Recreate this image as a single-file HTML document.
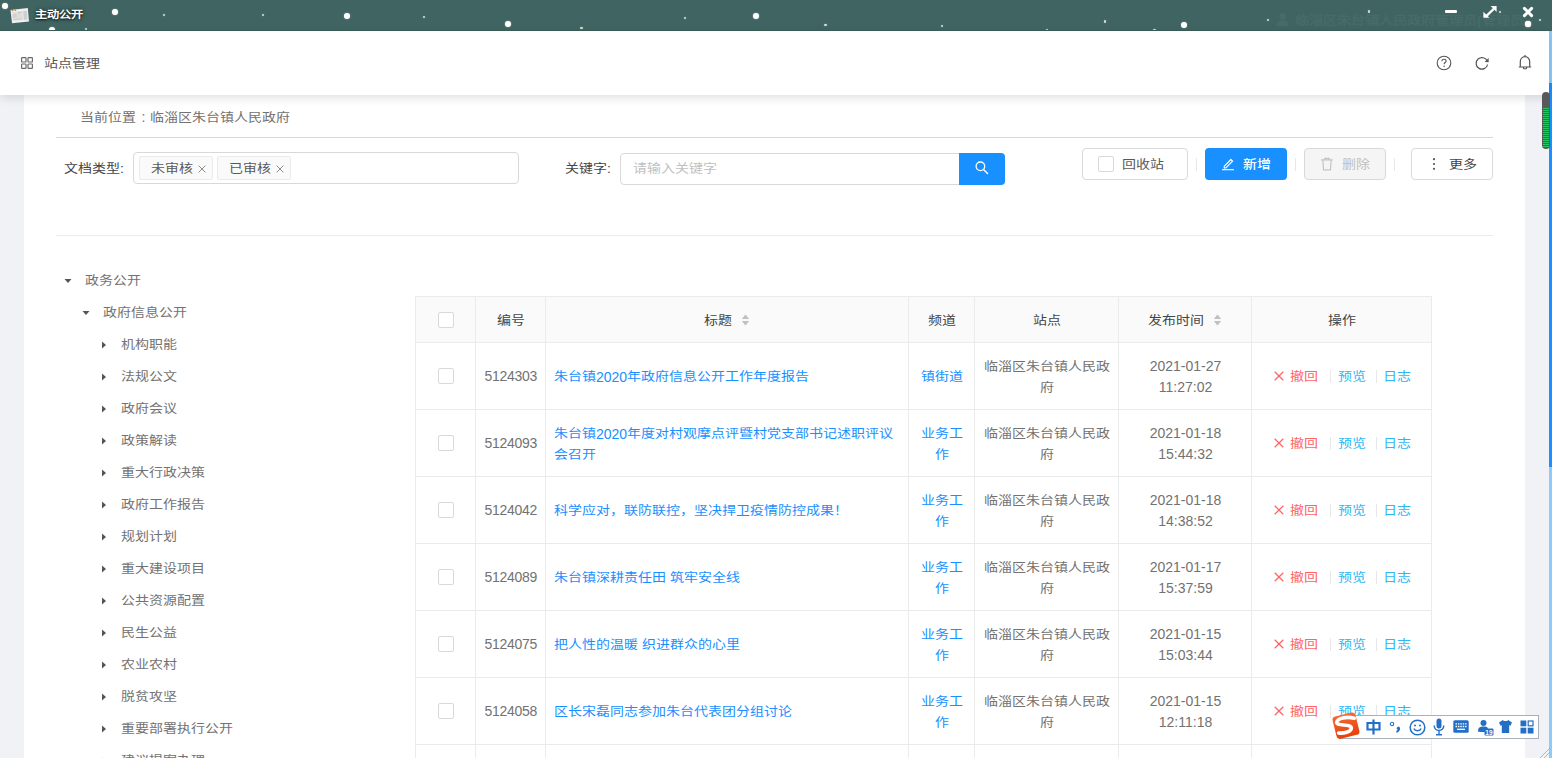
<!DOCTYPE html><html lang="zh-CN"><head><meta charset="utf-8"><title>主动公开</title><style>
*{margin:0;padding:0;box-sizing:border-box;}
html,body{width:1552px;height:758px;overflow:hidden;}
body{font-family:"Liberation Sans",sans-serif;font-size:14px;color:#666;background:#f0f2f5;position:relative;}
div,svg{position:absolute;}
.t{white-space:nowrap;line-height:20px;height:20px;}
.cj{transform-origin:0 10px;transform:scaleY(0.86);}
.cj .d{display:inline-block;transform-origin:0 10px;transform:scaleY(1.1628);}
.c{text-align:center;}
#tb{left:0;top:0;width:1552px;height:31px;background:#3f6461;overflow:hidden;border-bottom:1px solid #3a5e58;}
.dot{background:#fff;border-radius:50%;box-shadow:0 0 1.5px rgba(255,255,255,.6);}
#hd{left:0;top:31px;width:1549px;height:64px;background:#fff;box-shadow:0 3px 10px -1px rgba(0,0,0,.14);z-index:3;}
#pn{left:24px;top:95px;width:1501px;height:663px;background:#fff;}
.hr{height:1px;background:#e3e3e3;}
.box{border:1px solid #d9d9d9;border-radius:4px;background:#fff;}
.tag{border:1px solid #ebebeb;background:#fafafa;border-radius:2px;}
.btn{border:1px solid #d9d9d9;border-radius:4px;background:#fff;}
.sep{width:1px;background:#e8e8e8;}
.cb{width:16px;height:16px;border:1px solid #d9d9d9;border-radius:2px;background:#fff;}
.vl{width:1px;background:#ebebeb;}
.hl{height:1px;background:#ebebeb;}
.lnk{color:#1890ff;}
.red{color:#ff6363;}
.cy{color:#2db7f5;}
</style></head><body>
<div id="tb">
<div class="dot" style="left:2.3px;top:3.1px;width:6px;height:6px;"></div>
<div class="dot" style="left:111.7px;top:8.6px;width:6px;height:6px;"></div>
<div class="dot" style="left:343.5px;top:13.4px;width:6px;height:6px;"></div>
<div class="dot" style="left:505.2px;top:20.8px;width:6px;height:6px;"></div>
<div class="dot" style="left:753.4px;top:12.5px;width:6px;height:6px;"></div>
<div class="dot" style="left:1180.5px;top:22.0px;width:6px;height:6px;"></div>
<div class="dot" style="left:1524.5px;top:21.0px;width:6px;height:6px;"></div>
<div class="dot" style="left:162.8px;top:13.8px;width:2.4px;height:2.4px;opacity:.75"></div>
<div class="dot" style="left:261.8px;top:13.8px;width:2.4px;height:2.4px;opacity:.75"></div>
<div class="dot" style="left:422.8px;top:15.6px;width:2.4px;height:2.4px;opacity:.75"></div>
<div class="dot" style="left:580.2px;top:26.8px;width:2.4px;height:2.4px;opacity:.75"></div>
<div class="dot" style="left:683.8px;top:16.8px;width:2.4px;height:2.4px;opacity:.75"></div>
<div class="dot" style="left:824.3px;top:23.8px;width:2.4px;height:2.4px;opacity:.75"></div>
<div class="dot" style="left:940.8px;top:24.6px;width:2.4px;height:2.4px;opacity:.75"></div>
<div class="dot" style="left:1103.8px;top:20.2px;width:2.4px;height:2.4px;opacity:.75"></div>
<div class="dot" style="left:1266.6px;top:18.6px;width:2.4px;height:2.4px;opacity:.75"></div>
<div class="dot" style="left:1367.8px;top:10.3px;width:2.4px;height:2.4px;opacity:.75"></div>
<div class="dot" style="left:1498.8px;top:10.5px;width:2.4px;height:2.4px;opacity:.75"></div>
<div class="dot" style="left:1538.8px;top:18.6px;width:2.4px;height:2.4px;opacity:.75"></div>
<div class="dot" style="left:84.8px;top:27.8px;width:2.4px;height:2.4px;opacity:.75"></div>
<div class="dot" style="left:1045.8px;top:28.8px;width:2.4px;height:2.4px;opacity:.75"></div>
<div class="dot" style="left:1153.4px;top:28.8px;width:2.4px;height:2.4px;opacity:.75"></div>
<div class="dot" style="left:48.5px;top:27px;width:6px;height:6px;"></div>
<svg style="left:9px;top:6px" width="22" height="19" viewBox="0 0 22 19"><polygon points="1.5,3.9 18.8,1.9 20,15.4 3,17.2" fill="#efefef"/><polygon points="14.1,5.1 17.9,4.7 18.6,13.6 14.8,14" fill="#cfcfcf"/><polygon points="3.2,6.3 13.4,5.2 14,13.8 3.9,14.8" fill="#dedede"/><polygon points="3.5,8.2 7.5,7.8 7.8,11.5 3.8,11.9" fill="#d2d2d2"/><polygon points="8.8,6.1 12.5,5.7 12.6,7 8.9,7.4" fill="#c8c8c8"/><polygon points="4.2,13.2 13.2,12.3 13.3,13.2 4.3,14.1" fill="#cacaca"/><circle cx="3.3" cy="4.4" r=".75" fill="#e86a6a"/><circle cx="4.8" cy="4.3" r=".75" fill="#e8b84a"/><circle cx="6.3" cy="4.2" r=".75" fill="#4ac24a"/></svg>
<div class="t cj" style="left:34.5px;top:5.20px;color:#fff;font-size:12.2px;font-weight:bold;text-shadow:0 1px 2px rgba(0,0,0,.75),0 0 5px rgba(0,0,0,.5);">主动公开</div>
<svg style="left:1276px;top:13px" width="13" height="13" viewBox="0 0 13 13"><circle cx="6.5" cy="3.6" r="3.3" fill="#476b66"/><path d="M0.5 13 C0.5 8 3 7.3 6.5 7.3 C10 7.3 12.5 8 12.5 13Z" fill="#476b66"/></svg>
<div class="t cj" style="left:1295px;top:10.80px;color:#476b66;font-size:14.3px;font-weight:bold;">临淄区朱台镇人民政府管理员[管理员</div>
<div class="dot" style="left:1524.5px;top:21px;width:6px;height:6px;"></div>
<div style="left:1445px;top:9.7px;width:12px;height:3.2px;background:#fff;border-radius:1px;"></div>
<svg style="left:1483px;top:5px" width="14" height="14" viewBox="0 0 14 14"><path d="M7.6 1 H13.6 V7 Z M0.4 6.8 V12.8 H6.4 Z" fill="#fff"/><path d="M11 3.6 L3 11.4" stroke="#fff" stroke-width="2.2"/></svg>
<svg style="left:1522px;top:6.4px" width="12" height="12" viewBox="0 0 12 12"><path d="M2.4 2.4 L9.6 9.6 M9.6 2.4 L2.4 9.6" stroke="#fff" stroke-width="3" stroke-linecap="round"/></svg>
</div>
<div id="hd"></div>
<svg style="left:21px;top:57px;z-index:4" width="12" height="12" viewBox="0 0 12 12" fill="none" stroke="#6a6a6a" stroke-width="1.2"><rect x=".6" y=".6" width="4.4" height="4.4" rx=".6"/><rect x="7" y=".6" width="4.4" height="4.4" rx=".6"/><rect x=".6" y="7" width="4.4" height="4.4" rx=".6"/><rect x="7" y="7" width="4.4" height="4.4" rx=".6"/></svg>
<div class="t cj" style="left:44px;top:53.70px;color:#555;z-index:4;">站点管理</div>
<svg style="left:1436px;top:55px;z-index:4" width="16" height="16" viewBox="0 0 16 16"><circle cx="8" cy="8" r="6.8" fill="none" stroke="#555" stroke-width="1.1"/><path d="M5.9 6.2 C5.9 4.9 6.9 4.2 8 4.2 C9.2 4.2 10.1 5 10.1 6.1 C10.1 7.4 8.1 7.6 8.1 9.2" fill="none" stroke="#555" stroke-width="1.1"/><circle cx="8.1" cy="11.3" r=".75" fill="#555"/></svg>
<svg style="left:1474px;top:55px;z-index:4" width="16" height="16" viewBox="0 0 16 16"><path d="M13.3 6.2 A5.8 5.8 0 1 0 13.6 9.5" fill="none" stroke="#555" stroke-width="1.2"/><path d="M14.6 3 L14.7 7.2 L10.6 6.9 Z" fill="#555"/></svg>
<svg style="left:1517px;top:54px;z-index:4" width="16" height="17" viewBox="0 0 16 17"><path d="M8 1 V2.2 M3.3 13 V7.8 C3.3 4.9 5.3 2.6 8 2.6 C10.7 2.6 12.7 4.9 12.7 7.8 V13 M1.8 13 H14.2 M6.2 13.2 C6.2 15.6 9.8 15.6 9.8 13.2" fill="none" stroke="#555" stroke-width="1.2"/></svg>
<div id="pn"></div>
<div class="t cj" style="left:80px;top:108.05px;color:#727272;">当前位置</div>
<div class="t" style="left:141.5px;top:107.25px;color:#727272;">:</div>
<div class="t cj" style="left:150px;top:108.05px;color:#727272;">临淄区朱台镇人民政府</div>
<div class="hr" style="left:56px;top:137px;width:1437px;background:#d9d9d9;"></div>
<div class="hr" style="left:56px;top:235px;width:1437px;background:#ececec;"></div>
<div class="t cj" style="left:64px;top:159.15px;color:#444444;">文档类型:</div>
<div class="box" style="left:133px;top:152px;width:386px;height:32px;"></div>
<div class="tag" style="left:139px;top:156px;width:74px;height:24px;"></div>
<div class="t cj" style="left:150.5px;top:158.90px;color:#595959;">未审核</div>
<div class="tag" style="left:217px;top:156px;width:74px;height:24px;"></div>
<div class="t cj" style="left:228.5px;top:158.90px;color:#595959;">已审核</div>
<svg style="left:198px;top:164.5px" width="8" height="8" viewBox="0 0 8 8"><path d="M.6 .6 L7.4 7.4 M7.4 .6 L.6 7.4" stroke="#8c8c8c" stroke-width="1"/></svg>
<svg style="left:276.3px;top:164.5px" width="8" height="8" viewBox="0 0 8 8"><path d="M.6 .6 L7.4 7.4 M7.4 .6 L.6 7.4" stroke="#8c8c8c" stroke-width="1"/></svg>
<div class="t cj" style="left:565px;top:158.90px;color:#444444;">关键字:</div>
<div class="box" style="left:620px;top:153px;width:345px;height:32px;border-radius:4px 0 0 4px;"></div>
<div class="t cj" style="left:632.5px;top:159.20px;color:#bfbfbf;">请输入关键字</div>
<div style="left:959px;top:153px;width:46px;height:32px;background:#1890ff;border-radius:0 4px 4px 0;"></div>
<svg style="left:974px;top:160px" width="16" height="16" viewBox="0 0 16 16"><circle cx="6.4" cy="6.3" r="4.3" fill="none" stroke="#fff" stroke-width="1.3"/><path d="M9.5 9.4 L13.6 13.5" stroke="#fff" stroke-width="1.4" stroke-linecap="round"/></svg>
<div class="btn" style="left:1082px;top:148px;width:106px;height:32px;"></div>
<div class="cb" style="left:1098px;top:156px;"></div>
<div class="t cj" style="left:1122px;top:154.60px;color:#595959;">回收站</div>
<div class="sep" style="left:1196px;top:158px;height:13px;"></div>
<div style="left:1205px;top:148px;width:82px;height:32px;background:#1890ff;border-radius:4px;"></div>
<svg style="left:1221px;top:157px" width="14" height="14" viewBox="0 0 14 14"><path d="M3.2 9.4 L3.3 11 L4.9 10.9 L11.6 4.2 L9.9 2.5 Z" fill="none" stroke="#fff" stroke-width="1.2" stroke-linejoin="round"/><path d="M1 12.7 H13" stroke="#fff" stroke-width="1.1"/></svg>
<div class="t cj" style="left:1242.5px;top:154.60px;color:#fff;letter-spacing:0.6px;text-shadow:0.25px 0 0 rgba(255,255,255,.6);">新增</div>
<div class="sep" style="left:1295px;top:158px;height:13px;"></div>
<div class="btn" style="left:1304px;top:148px;width:82px;height:32px;background:#f5f5f5;"></div>
<svg style="left:1320px;top:157px" width="14" height="14" viewBox="0 0 14 14"><path d="M1.2 2.9 H12.8 M4.8 2.9 V1.3 H9.2 V2.9 M2.9 2.9 L3.5 12.8 H10.5 L11.1 2.9" fill="none" stroke="#c4c4c4" stroke-width="1.2"/></svg>
<div class="t cj" style="left:1342px;top:154.60px;color:#bfbfbf;">删除</div>
<div class="sep" style="left:1394px;top:158px;height:13px;"></div>
<div class="btn" style="left:1411px;top:148px;width:82px;height:32px;"></div>
<svg style="left:1432px;top:157px" width="4" height="14" viewBox="0 0 4 14"><circle cx="2" cy="2.2" r="1.1" fill="#555"/><circle cx="2" cy="7" r="1.1" fill="#555"/><circle cx="2" cy="11.8" r="1.1" fill="#555"/></svg>
<div class="t cj" style="left:1449px;top:154.60px;color:#444444;">更多</div>
<svg style="left:64px;top:278px" width="8" height="6" viewBox="0 0 8 6"><path d="M.5 1 H7.5 L4 5 Z" fill="#555"/></svg>
<div class="t cj" style="left:85px;top:270.50px;color:#727272;">政务公开</div>
<svg style="left:82px;top:310px" width="8" height="6" viewBox="0 0 8 6"><path d="M.5 1 H7.5 L4 5 Z" fill="#555"/></svg>
<div class="t cj" style="left:103px;top:302.50px;color:#727272;">政府信息公开</div>
<svg style="left:101px;top:341.0px" width="6" height="8" viewBox="0 0 6 8"><path d="M1 .5 V7.5 L5 4 Z" fill="#555"/></svg>
<div class="t cj" style="left:121px;top:334.50px;color:#727272;">机构职能</div>
<svg style="left:101px;top:373.0px" width="6" height="8" viewBox="0 0 6 8"><path d="M1 .5 V7.5 L5 4 Z" fill="#555"/></svg>
<div class="t cj" style="left:121px;top:366.50px;color:#727272;">法规公文</div>
<svg style="left:101px;top:405.0px" width="6" height="8" viewBox="0 0 6 8"><path d="M1 .5 V7.5 L5 4 Z" fill="#555"/></svg>
<div class="t cj" style="left:121px;top:398.50px;color:#727272;">政府会议</div>
<svg style="left:101px;top:437.0px" width="6" height="8" viewBox="0 0 6 8"><path d="M1 .5 V7.5 L5 4 Z" fill="#555"/></svg>
<div class="t cj" style="left:121px;top:430.50px;color:#727272;">政策解读</div>
<svg style="left:101px;top:469.0px" width="6" height="8" viewBox="0 0 6 8"><path d="M1 .5 V7.5 L5 4 Z" fill="#555"/></svg>
<div class="t cj" style="left:121px;top:462.50px;color:#727272;">重大行政决策</div>
<svg style="left:101px;top:501.0px" width="6" height="8" viewBox="0 0 6 8"><path d="M1 .5 V7.5 L5 4 Z" fill="#555"/></svg>
<div class="t cj" style="left:121px;top:494.50px;color:#727272;">政府工作报告</div>
<svg style="left:101px;top:533.0px" width="6" height="8" viewBox="0 0 6 8"><path d="M1 .5 V7.5 L5 4 Z" fill="#555"/></svg>
<div class="t cj" style="left:121px;top:526.50px;color:#727272;">规划计划</div>
<svg style="left:101px;top:565.0px" width="6" height="8" viewBox="0 0 6 8"><path d="M1 .5 V7.5 L5 4 Z" fill="#555"/></svg>
<div class="t cj" style="left:121px;top:558.50px;color:#727272;">重大建设项目</div>
<svg style="left:101px;top:597.0px" width="6" height="8" viewBox="0 0 6 8"><path d="M1 .5 V7.5 L5 4 Z" fill="#555"/></svg>
<div class="t cj" style="left:121px;top:590.50px;color:#727272;">公共资源配置</div>
<svg style="left:101px;top:629.0px" width="6" height="8" viewBox="0 0 6 8"><path d="M1 .5 V7.5 L5 4 Z" fill="#555"/></svg>
<div class="t cj" style="left:121px;top:622.50px;color:#727272;">民生公益</div>
<svg style="left:101px;top:661.0px" width="6" height="8" viewBox="0 0 6 8"><path d="M1 .5 V7.5 L5 4 Z" fill="#555"/></svg>
<div class="t cj" style="left:121px;top:654.50px;color:#727272;">农业农村</div>
<svg style="left:101px;top:693.0px" width="6" height="8" viewBox="0 0 6 8"><path d="M1 .5 V7.5 L5 4 Z" fill="#555"/></svg>
<div class="t cj" style="left:121px;top:686.50px;color:#727272;">脱贫攻坚</div>
<svg style="left:101px;top:725.0px" width="6" height="8" viewBox="0 0 6 8"><path d="M1 .5 V7.5 L5 4 Z" fill="#555"/></svg>
<div class="t cj" style="left:121px;top:718.50px;color:#727272;">重要部署执行公开</div>
<svg style="left:101px;top:757.0px" width="6" height="8" viewBox="0 0 6 8"><path d="M1 .5 V7.5 L5 4 Z" fill="#555"/></svg>
<div class="t cj" style="left:121px;top:750.50px;color:#727272;">建议提案办理</div>
<div style="left:415px;top:296px;width:1017px;height:46px;background:#fafafa;"></div>
<div class="hl" style="left:415px;top:296px;width:1017px;"></div>
<div class="hl" style="left:415px;top:342px;width:1017px;"></div>
<div class="hl" style="left:415px;top:409px;width:1017px;"></div>
<div class="hl" style="left:415px;top:476px;width:1017px;"></div>
<div class="hl" style="left:415px;top:543px;width:1017px;"></div>
<div class="hl" style="left:415px;top:610px;width:1017px;"></div>
<div class="hl" style="left:415px;top:677px;width:1017px;"></div>
<div class="hl" style="left:415px;top:744px;width:1017px;"></div>
<div class="vl" style="left:415px;top:296px;height:462px;"></div>
<div class="vl" style="left:475px;top:296px;height:462px;"></div>
<div class="vl" style="left:545px;top:296px;height:462px;"></div>
<div class="vl" style="left:908px;top:296px;height:462px;"></div>
<div class="vl" style="left:974px;top:296px;height:462px;"></div>
<div class="vl" style="left:1118px;top:296px;height:462px;"></div>
<div class="vl" style="left:1251px;top:296px;height:462px;"></div>
<div class="vl" style="left:1431px;top:296px;height:462px;"></div>
<div class="cb" style="left:438px;top:312px;"></div>
<div class="t cj c" style="left:476px;top:310.80px;width:70px;color:#444444;">编号</div>
<div class="t cj c" style="left:909px;top:310.80px;width:66px;color:#444444;">频道</div>
<div class="t cj c" style="left:975px;top:310.80px;width:144px;color:#444444;">站点</div>
<div class="t cj c" style="left:1252px;top:310.80px;width:180px;color:#444444;">操作</div>
<div class="t cj" style="left:703.5px;top:310.80px;color:#444444;">标题</div>
<svg style="left:740.5px;top:313px" width="9" height="14" viewBox="0 0 9 14"><path d="M.8 6 L4.5 1.6 L8.2 6Z M.8 8 L4.5 12.4 L8.2 8Z" fill="#bfbfbf"/></svg>
<div class="t cj" style="left:1147.5px;top:310.80px;color:#444444;">发布时间</div>
<svg style="left:1212.5px;top:313px" width="9" height="14" viewBox="0 0 9 14"><path d="M.8 6 L4.5 1.6 L8.2 6Z M.8 8 L4.5 12.4 L8.2 8Z" fill="#bfbfbf"/></svg>
<div class="cb" style="left:438px;top:367.5px;"></div>
<div class="t" style="left:484.5px;top:366.00px;color:#727272;letter-spacing:-0.3px;">5124303</div>
<div class="t cj" style="left:554px;top:366.70px;color:#1890ff;">朱台镇<span class="d">2020</span>年政府信息公开工作年度报告</div>
<div class="t cj c" style="left:908px;top:366.70px;width:67px;color:#1890ff;">镇街道</div>
<div class="t cj c" style="left:975px;top:357.00px;width:144px;color:#727272;">临淄区朱台镇人民政</div>
<div class="t cj c" style="left:975px;top:377.90px;width:144px;color:#727272;">府</div>
<div class="t c" style="left:1119px;top:356.25px;width:133px;color:#727272;">2021-01-27</div>
<div class="t c" style="left:1119px;top:377.15px;width:133px;color:#727272;">11:27:02</div>
<svg style="left:1273.8px;top:370.9px" width="10" height="10" viewBox="0 0 10 10"><path d="M.7 .7 L9.3 9.3 M9.3 .7 L.7 9.3" stroke="#ff6363" stroke-width="1.25"/></svg>
<div class="t cj" style="left:1289.5px;top:366.70px;color:#ff6363;">撤回</div>
<div class="sep" style="left:1330px;top:369.5px;height:13px;"></div>
<div class="t cj" style="left:1338px;top:366.70px;color:#2db7f5;">预览</div>
<div class="sep" style="left:1375.5px;top:369.5px;height:13px;"></div>
<div class="t cj" style="left:1382.5px;top:366.70px;color:#2db7f5;">日志</div>
<div class="cb" style="left:438px;top:434.5px;"></div>
<div class="t" style="left:484.5px;top:433.00px;color:#727272;letter-spacing:-0.3px;">5124093</div>
<div class="t cj" style="left:554px;top:424.00px;color:#1890ff;">朱台镇<span class="d">2020</span>年度对村观摩点评暨村党支部书记述职评议</div>
<div class="t cj" style="left:554px;top:444.90px;color:#1890ff;">会召开</div>
<div class="t cj c" style="left:908px;top:424.00px;width:67px;color:#1890ff;">业务工</div>
<div class="t cj c" style="left:908px;top:444.90px;width:67px;color:#1890ff;">作</div>
<div class="t cj c" style="left:975px;top:424.00px;width:144px;color:#727272;">临淄区朱台镇人民政</div>
<div class="t cj c" style="left:975px;top:444.90px;width:144px;color:#727272;">府</div>
<div class="t c" style="left:1119px;top:423.25px;width:133px;color:#727272;">2021-01-18</div>
<div class="t c" style="left:1119px;top:444.15px;width:133px;color:#727272;">15:44:32</div>
<svg style="left:1273.8px;top:437.9px" width="10" height="10" viewBox="0 0 10 10"><path d="M.7 .7 L9.3 9.3 M9.3 .7 L.7 9.3" stroke="#ff6363" stroke-width="1.25"/></svg>
<div class="t cj" style="left:1289.5px;top:433.70px;color:#ff6363;">撤回</div>
<div class="sep" style="left:1330px;top:436.5px;height:13px;"></div>
<div class="t cj" style="left:1338px;top:433.70px;color:#2db7f5;">预览</div>
<div class="sep" style="left:1375.5px;top:436.5px;height:13px;"></div>
<div class="t cj" style="left:1382.5px;top:433.70px;color:#2db7f5;">日志</div>
<div class="cb" style="left:438px;top:501.5px;"></div>
<div class="t" style="left:484.5px;top:500.00px;color:#727272;letter-spacing:-0.3px;">5124042</div>
<div class="t cj" style="left:554px;top:500.70px;color:#1890ff;">科学应对，联防联控，坚决捍卫疫情防控成果！</div>
<div class="t cj c" style="left:908px;top:491.00px;width:67px;color:#1890ff;">业务工</div>
<div class="t cj c" style="left:908px;top:511.90px;width:67px;color:#1890ff;">作</div>
<div class="t cj c" style="left:975px;top:491.00px;width:144px;color:#727272;">临淄区朱台镇人民政</div>
<div class="t cj c" style="left:975px;top:511.90px;width:144px;color:#727272;">府</div>
<div class="t c" style="left:1119px;top:490.25px;width:133px;color:#727272;">2021-01-18</div>
<div class="t c" style="left:1119px;top:511.15px;width:133px;color:#727272;">14:38:52</div>
<svg style="left:1273.8px;top:504.9px" width="10" height="10" viewBox="0 0 10 10"><path d="M.7 .7 L9.3 9.3 M9.3 .7 L.7 9.3" stroke="#ff6363" stroke-width="1.25"/></svg>
<div class="t cj" style="left:1289.5px;top:500.70px;color:#ff6363;">撤回</div>
<div class="sep" style="left:1330px;top:503.5px;height:13px;"></div>
<div class="t cj" style="left:1338px;top:500.70px;color:#2db7f5;">预览</div>
<div class="sep" style="left:1375.5px;top:503.5px;height:13px;"></div>
<div class="t cj" style="left:1382.5px;top:500.70px;color:#2db7f5;">日志</div>
<div class="cb" style="left:438px;top:568.5px;"></div>
<div class="t" style="left:484.5px;top:567.00px;color:#727272;letter-spacing:-0.3px;">5124089</div>
<div class="t cj" style="left:554px;top:567.70px;color:#1890ff;">朱台镇深耕责任田 筑牢安全线</div>
<div class="t cj c" style="left:908px;top:558.00px;width:67px;color:#1890ff;">业务工</div>
<div class="t cj c" style="left:908px;top:578.90px;width:67px;color:#1890ff;">作</div>
<div class="t cj c" style="left:975px;top:558.00px;width:144px;color:#727272;">临淄区朱台镇人民政</div>
<div class="t cj c" style="left:975px;top:578.90px;width:144px;color:#727272;">府</div>
<div class="t c" style="left:1119px;top:557.25px;width:133px;color:#727272;">2021-01-17</div>
<div class="t c" style="left:1119px;top:578.15px;width:133px;color:#727272;">15:37:59</div>
<svg style="left:1273.8px;top:571.9px" width="10" height="10" viewBox="0 0 10 10"><path d="M.7 .7 L9.3 9.3 M9.3 .7 L.7 9.3" stroke="#ff6363" stroke-width="1.25"/></svg>
<div class="t cj" style="left:1289.5px;top:567.70px;color:#ff6363;">撤回</div>
<div class="sep" style="left:1330px;top:570.5px;height:13px;"></div>
<div class="t cj" style="left:1338px;top:567.70px;color:#2db7f5;">预览</div>
<div class="sep" style="left:1375.5px;top:570.5px;height:13px;"></div>
<div class="t cj" style="left:1382.5px;top:567.70px;color:#2db7f5;">日志</div>
<div class="cb" style="left:438px;top:635.5px;"></div>
<div class="t" style="left:484.5px;top:634.00px;color:#727272;letter-spacing:-0.3px;">5124075</div>
<div class="t cj" style="left:554px;top:634.70px;color:#1890ff;">把人性的温暖 织进群众的心里</div>
<div class="t cj c" style="left:908px;top:625.00px;width:67px;color:#1890ff;">业务工</div>
<div class="t cj c" style="left:908px;top:645.90px;width:67px;color:#1890ff;">作</div>
<div class="t cj c" style="left:975px;top:625.00px;width:144px;color:#727272;">临淄区朱台镇人民政</div>
<div class="t cj c" style="left:975px;top:645.90px;width:144px;color:#727272;">府</div>
<div class="t c" style="left:1119px;top:624.25px;width:133px;color:#727272;">2021-01-15</div>
<div class="t c" style="left:1119px;top:645.15px;width:133px;color:#727272;">15:03:44</div>
<svg style="left:1273.8px;top:638.9px" width="10" height="10" viewBox="0 0 10 10"><path d="M.7 .7 L9.3 9.3 M9.3 .7 L.7 9.3" stroke="#ff6363" stroke-width="1.25"/></svg>
<div class="t cj" style="left:1289.5px;top:634.70px;color:#ff6363;">撤回</div>
<div class="sep" style="left:1330px;top:637.5px;height:13px;"></div>
<div class="t cj" style="left:1338px;top:634.70px;color:#2db7f5;">预览</div>
<div class="sep" style="left:1375.5px;top:637.5px;height:13px;"></div>
<div class="t cj" style="left:1382.5px;top:634.70px;color:#2db7f5;">日志</div>
<div class="cb" style="left:438px;top:702.5px;"></div>
<div class="t" style="left:484.5px;top:701.00px;color:#727272;letter-spacing:-0.3px;">5124058</div>
<div class="t cj" style="left:554px;top:701.70px;color:#1890ff;">区长宋磊同志参加朱台代表团分组讨论</div>
<div class="t cj c" style="left:908px;top:692.00px;width:67px;color:#1890ff;">业务工</div>
<div class="t cj c" style="left:908px;top:712.90px;width:67px;color:#1890ff;">作</div>
<div class="t cj c" style="left:975px;top:692.00px;width:144px;color:#727272;">临淄区朱台镇人民政</div>
<div class="t cj c" style="left:975px;top:712.90px;width:144px;color:#727272;">府</div>
<div class="t c" style="left:1119px;top:691.25px;width:133px;color:#727272;">2021-01-15</div>
<div class="t c" style="left:1119px;top:712.15px;width:133px;color:#727272;">12:11:18</div>
<svg style="left:1273.8px;top:705.9px" width="10" height="10" viewBox="0 0 10 10"><path d="M.7 .7 L9.3 9.3 M9.3 .7 L.7 9.3" stroke="#ff6363" stroke-width="1.25"/></svg>
<div class="t cj" style="left:1289.5px;top:701.70px;color:#ff6363;">撤回</div>
<div class="sep" style="left:1330px;top:704.5px;height:13px;"></div>
<div class="t cj" style="left:1338px;top:701.70px;color:#2db7f5;">预览</div>
<div class="sep" style="left:1375.5px;top:704.5px;height:13px;"></div>
<div class="t cj" style="left:1382.5px;top:701.70px;color:#2db7f5;">日志</div>
<div style="left:1549px;top:31px;width:3px;height:52px;background:#8ccbfb;"></div>
<div style="left:1549px;top:83px;width:3px;height:384px;background:#1890ff;"></div>
<div style="left:1549px;top:467px;width:3px;height:291px;background:#8ccbfb;"></div>
<div style="left:1542px;top:92px;width:7.5px;height:57px;background:#5a5a5a;border-radius:4px;z-index:4;overflow:hidden;"><div style="left:1px;top:16.0px;width:6px;height:1.2px;background:#22c55e;"></div><div style="left:1px;top:18.0px;width:6px;height:1.2px;background:#22c55e;"></div><div style="left:1px;top:20.0px;width:6px;height:1.2px;background:#22c55e;"></div><div style="left:1px;top:22.0px;width:6px;height:1.2px;background:#22c55e;"></div><div style="left:1px;top:24.0px;width:6px;height:1.2px;background:#22c55e;"></div><div style="left:1px;top:26.0px;width:6px;height:1.2px;background:#22c55e;"></div><div style="left:1px;top:28.0px;width:6px;height:1.2px;background:#22c55e;"></div><div style="left:1px;top:30.0px;width:6px;height:1.2px;background:#22c55e;"></div><div style="left:1px;top:32.0px;width:6px;height:1.2px;background:#22c55e;"></div><div style="left:1px;top:34.0px;width:6px;height:1.2px;background:#22c55e;"></div><div style="left:1px;top:36.0px;width:6px;height:1.2px;background:#22c55e;"></div><div style="left:1px;top:38.0px;width:6px;height:1.2px;background:#22c55e;"></div><div style="left:1px;top:40.0px;width:6px;height:1.2px;background:#22c55e;"></div><div style="left:1px;top:42.0px;width:6px;height:1.2px;background:#22c55e;"></div><div style="left:1px;top:44.0px;width:6px;height:1.2px;background:#22c55e;"></div><div style="left:1px;top:46.0px;width:6px;height:1.2px;background:#22c55e;"></div><div style="left:1px;top:48.0px;width:6px;height:1.2px;background:#22c55e;"></div><div style="left:1px;top:50.0px;width:6px;height:1.2px;background:#22c55e;"></div><div style="left:1px;top:52.0px;width:6px;height:1.2px;background:#22c55e;"></div><div style="left:1px;top:54.0px;width:6px;height:1.2px;background:#22c55e;"></div></div>
<div style="left:1340px;top:715px;width:199px;height:24px;background:#fff;border:1px solid #a9b0bd;z-index:5;"></div>
<svg style="left:1331px;top:711px;z-index:6" width="30" height="29" viewBox="0 0 30 29"><defs><linearGradient id="sg" x1="0" y1="0" x2="0" y2="1"><stop offset="0" stop-color="#f46a35"/><stop offset="1" stop-color="#e8400a"/></linearGradient></defs><rect x="3.2" y="3.2" width="23.5" height="23" rx="3.5" transform="rotate(-14 15 14.5)" fill="url(#sg)"/><path d="M23.2 7.2 C16 5.2 5.8 7 5.8 11.6 C5.8 15.2 20.3 12.6 20.3 17 C20.3 21.2 12 22.6 7.6 22" fill="none" stroke="#fff" stroke-width="3.6" stroke-linecap="round"/><path d="M10.5 11.2 L19 10.8" stroke="#f05a22" stroke-width="1.4"/></svg>
<div style="left:1365px;top:716px;width:174px;height:22px;z-index:6;"><svg style="left:1px;top:3px" width="15" height="16" viewBox="0 0 15 16"><path d="M7.5 0.5 V15.5 M1.5 4 H13.5 V10.5 H1.5 Z" fill="none" stroke="#236fc6" stroke-width="2.2"/></svg><svg style="left:24px;top:4px" width="12" height="14" viewBox="0 0 12 14"><circle cx="3" cy="4" r="1.7" fill="none" stroke="#236fc6" stroke-width="1.1"/><path d="M9 7.5 C10 7.5 10.3 8.5 10 9.5 C9.6 10.8 8.5 11.6 7.5 12" fill="none" stroke="#236fc6" stroke-width="2"/><circle cx="9" cy="8.4" r="1.3" fill="#236fc6"/></svg><svg style="left:44px;top:2.5px" width="17" height="17" viewBox="0 0 17 17"><circle cx="8.5" cy="8.5" r="7.3" fill="none" stroke="#236fc6" stroke-width="1.5"/><circle cx="6" cy="6.6" r="1" fill="#236fc6"/><circle cx="11" cy="6.6" r="1" fill="#236fc6"/><path d="M4.8 9.6 C6 12.5 11 12.5 12.2 9.6" fill="none" stroke="#236fc6" stroke-width="1.4"/></svg><svg style="left:68px;top:2px" width="12" height="18" viewBox="0 0 12 18"><rect x="3.5" y=".5" width="5" height="10" rx="2.5" fill="#236fc6"/><path d="M1.2 7.5 C1.2 14 10.8 14 10.8 7.5 M6 12.5 V16.5 M3 16.8 H9" fill="none" stroke="#236fc6" stroke-width="1.4"/></svg><svg style="left:88px;top:4px" width="16" height="13" viewBox="0 0 16 13"><rect x=".3" y=".3" width="15.4" height="12.4" rx="1.5" fill="#236fc6"/><path d="M2.5 3.8 H13.5 M2.5 6.5 H13.5" stroke="#fff" stroke-width="1.3" stroke-dasharray="1.5 .9"/><path d="M4 9.3 H12" stroke="#fff" stroke-width="1.3"/></svg><svg style="left:112px;top:2.5px" width="17" height="17" viewBox="0 0 17 17"><circle cx="6.5" cy="4" r="3" fill="#236fc6"/><path d="M1 12.5 C1 8.5 3 7.6 6.5 7.6 C9 7.6 10 8 10.8 9 L10.8 13 L3 13 Z" fill="#236fc6"/><rect x="7.5" y="9.5" width="9" height="7" rx="1" fill="#236fc6"/><text x="8.3" y="15.8" font-size="6.5" font-weight="bold" fill="#fff" font-family="Liberation Sans">19</text></svg><svg style="left:133px;top:3px" width="15" height="15" viewBox="0 0 15 15"><path d="M4.8 1 L1 3.5 L2.5 6.8 L3.8 6.2 V14 H11.2 V6.2 L12.5 6.8 L14 3.5 L10.2 1 C9.6 2.4 5.4 2.4 4.8 1Z" fill="#236fc6"/></svg><svg style="left:155px;top:3.5px" width="14" height="14" viewBox="0 0 14 14"><rect x=".5" y=".5" width="5.8" height="5.8" fill="#236fc6"/><rect x="8.2" y="1" width="4.8" height="4.8" fill="none" stroke="#236fc6" stroke-width="1.2"/><rect x=".5" y="7.7" width="5.8" height="5.8" fill="#236fc6"/><rect x="7.7" y="7.7" width="5.8" height="5.8" fill="#236fc6"/></svg></div>
<svg style="left:1538px;top:746px" width="12" height="12" viewBox="0 0 12 12"><path d="M2 12 L12 2 M6 12 L12 6" stroke="#9aa" stroke-width=".8"/></svg>
</body></html>
